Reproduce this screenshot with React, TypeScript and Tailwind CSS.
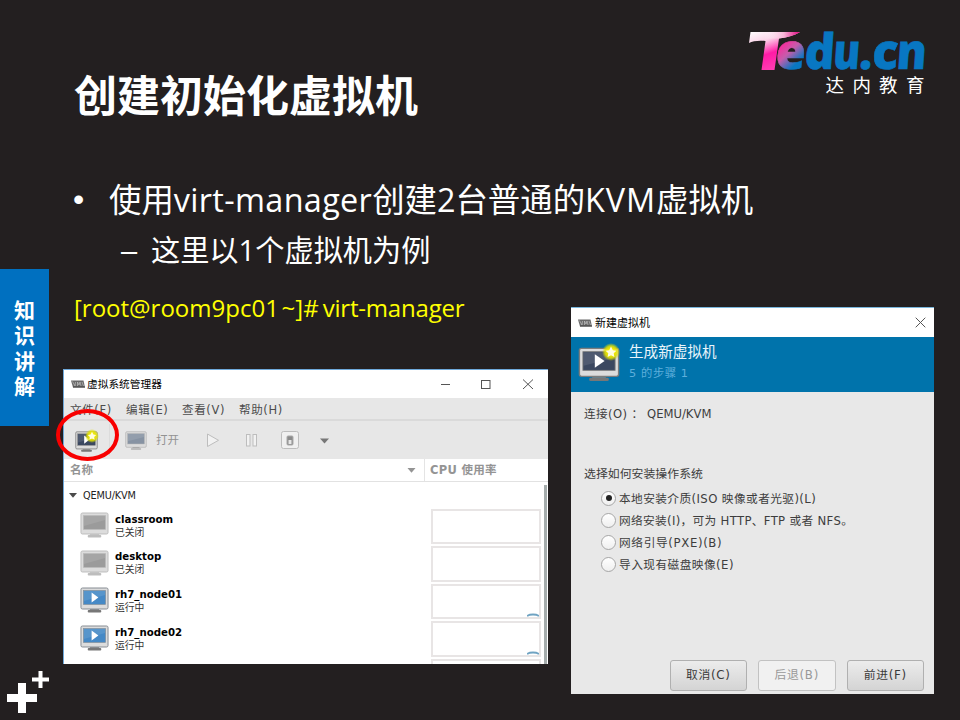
import React from "react";

const LATIN_UI = "font-['DejaVu_Sans','Noto_Sans_CJK_SC',sans-serif]";
const SLIDE = "font-['Open_Sans','Noto_Sans_CJK_SC',sans-serif]";
const CJK = "font-['Noto_Sans_CJK_SC',sans-serif]";
const MARKER = "font-['Liberation_Sans',sans-serif]";

const logoLetters = [
  { ch: "e", x: 28, w: 30 },
  { ch: "d", x: 57, w: 30 },
  { ch: "u", x: 85.5, w: 27 },
  { ch: ".", x: 112, w: 13 },
  { ch: "c", x: 124.5, w: 26 },
  { ch: "n", x: 149, w: 30 },
];

function Logo() {
  return (
    <svg className="block h-[70px] w-[180px] overflow-visible" viewBox="0 0 180 70">
      <defs>
        <linearGradient id="tee" x1="0" y1="0" x2="0.45" y2="1">
          <stop offset="0" stopColor="#ffffff" />
          <stop offset="0.3" stopColor="#fbd3e8" />
          <stop offset="0.62" stopColor="#ff1ba6" />
          <stop offset="1" stopColor="#ff3db2" />
        </linearGradient>
        <linearGradient id="bar" x1="0" y1="0" x2="1" y2="0">
          <stop offset="0" stopColor="#ffffff" stopOpacity="0" />
          <stop offset="0.55" stopColor="#f9b5d8" />
          <stop offset="1" stopColor="#e0007f" />
        </linearGradient>
        <linearGradient id="ee" gradientUnits="userSpaceOnUse" x1="28" y1="20" x2="44" y2="36">
          <stop offset="0" stopColor="#f0359f" />
          <stop offset="0.4" stopColor="#c65cab" />
          <stop offset="1" stopColor="#0877c2" />
        </linearGradient>
      </defs>
      <g
        transform="translate(3.400 0) skewX(-4)"
        className="font-['Open_Sans',sans-serif] text-[49px] font-extrabold"
        strokeWidth=".6"
      >
        {logoLetters.map((l, i) => (
          <text
            key={l.ch}
            x={l.x - 3}
            y="39.3"
            fill={i === 0 ? "url(#ee)" : "#0877c2"}
            stroke={i === 0 ? "url(#ee)" : "#0877c2"}
            textLength={l.w}
            lengthAdjust="spacingAndGlyphs"
          >
            {l.ch}
          </text>
        ))}
      </g>
      <path d="M1.500 2H51C46 5 39 7.500 30 8.500L25.500 40H12.500L16.500 11C9 10.500 4 11 0 13Z" fill="url(#tee)" />
      <path d="M15 2H51C46 5 39 7.500 30 8.500H16Z" fill="url(#bar)" />
      <text y="62" fill="#fff" className={CJK + " text-[18.5px]"}>
        <tspan x="76.500 103.500 130 157">达内教育</tspan>
      </text>
    </svg>
  );
}

function Monitor({ kind, className }: { kind: "off" | "on" | "new" | "dim"; className: string }) {
  const screen = { off: "#9b9b9b", on: "#4589c6", new: "#3b4860", dim: "#8793a3" }[kind];
  const edge = { off: "#bdbdbd", on: "#858b92", new: "#7c7c7c", dim: "#b5b5b5" }[kind];
  return (
    <svg className={className} viewBox="0 0 30 27" preserveAspectRatio="none">
      <path d="M11 20H19L20 23H10Z" fill={kind === "off" ? "#c9c9c9" : "#8a8a8a"} />
      <rect x="8" y="23" width="14" height="2.5" rx="1" fill={kind === "off" || kind === "dim" ? "#bdbdbd" : "#777"} />
      <rect x="1" y="1" width="28" height="21" rx="1.5" fill="#dcdcdc" stroke={edge} />
      <rect x="3.5" y="3.5" width="23" height="14" fill={screen} stroke={edge} strokeWidth=".6" />
      <path d="M4 4H26V8L4 14Z" fill="#fff" opacity=".1" />
      {(kind === "on" || kind === "new") && <path d="M12 5.500L19 10.500L12 15.500Z" fill="#fff" />}
    </svg>
  );
}

function Star({ className }: { className: string }) {
  return (
    <svg className={className} viewBox="0 0 20 20">
      <defs>
        <radialGradient id="glow">
          <stop offset="0.3" stopColor="#fff200" />
          <stop offset="0.68" stopColor="#e2e100" stopOpacity=".85" />
          <stop offset="1" stopColor="#d8dc00" stopOpacity="0" />
        </radialGradient>
      </defs>
      <circle cx="10" cy="10" r="10" fill="url(#glow)" />
      <path d="M10 4L12 8L16 8.600L13 11.500L13.800 15.500L10 13.600L6.200 15.500L7 11.500L4 8.600L8 8Z" fill="#fffde0" />
    </svg>
  );
}

function VmmMark() {
  return (
    <svg className="h-[8px] w-[14px] shrink-0" viewBox="0 0 14 8">
      <path d="M0 .5H12.500L14 7.500H2Z" fill="#6a6a6a" />
      <path d="M1.500 1.500L4 6L4.500 2M6.500 6V2L8 5L9 2L10 6M11 2L12.500 6" fill="none" stroke="#ccc" strokeWidth=".6" />
      <path d="M2 7H14" stroke="#444" />
    </svg>
  );
}

function Caret({ className }: { className: string }) {
  return (
    <svg className={className} viewBox="0 0 8 5">
      <path d="M0 0H8L4 4.800Z" fill="currentColor" />
    </svg>
  );
}

const vms = [
  { name: "classroom", state: "已关闭", on: false },
  { name: "desktop", state: "已关闭", on: false },
  { name: "rh7_node01", state: "运行中", on: true },
  { name: "rh7_node02", state: "运行中", on: true },
];

function Manager() {
  return (
    <section className={LATIN_UI + " relative flex h-[295px] w-[485px] flex-col border-t border-l border-[#6fa9db] bg-white"}>
      <div className="flex h-[28px] shrink-0 items-center pl-[7px] text-black">
        <VmmMark />
        <span className={CJK + " ml-[2px] text-[10.7px] leading-none"}>虚拟系统管理器</span>
        <svg className="ml-auto mr-[14px] h-[12px] w-[94px]" viewBox="0 0 94 12" fill="none" stroke="#555">
          <path d="M1 6.500H10" />
          <rect x="41.5" y="2.5" width="8.5" height="8" />
          <path d="M83 1.500L93 11M93 1.500L83 11" />
        </svg>
      </div>
      <div className="flex h-[23px] shrink-0 items-center border-b-2 border-[#dadada] bg-[#e7e7e7] pl-[6px] pt-[4px] text-[11.5px] leading-none tracking-[0.65px] text-[#4c4c4c]">
        <span className="w-[56px]">文件(F)</span>
        <span className="w-[56px]">编辑(E)</span>
        <span className="w-[57px]">查看(V)</span>
        <span>帮助(H)</span>
      </div>
      <div className="flex h-[38px] shrink-0 items-center bg-[#e7e7e7] text-[#929292]">
        <div className="relative ml-[11px] mt-[3px] h-[22px] w-[23px]">
          <Monitor kind="new" className="h-[22px] w-[23px]" />
          <Star className="absolute -right-[1px] -top-[2px] h-[14px] w-[14px]" />
        </div>
        <div className="ml-[11px] h-[32px] w-px bg-[#dcdcdc]" />
        <Monitor kind="dim" className="ml-[15px] mt-[2px] h-[20px] w-[22px]" />
        <span className="ml-[9px] mt-[1px] text-[11.5px] leading-none">打开</span>
        <svg className="ml-[27px] h-[20px] w-[123px]" viewBox="0 0 123 20" fill="none" stroke="#bdbdbd">
          <path d="M1.500 4L12.500 10.300L1.500 16.500Z" fill="#f2f2f2" />
          <rect x="40.5" y="4.5" width="3.5" height="11.5" fill="#f2f2f2" />
          <rect x="47" y="4.5" width="3.5" height="11.5" fill="#f2f2f2" />
          <rect x="75.5" y="1.5" width="17" height="17" rx="2" fill="#f0f0f0" />
          <rect x="81" y="6" width="6" height="9" rx="1" fill="#8b8b8b" stroke="#aaa" />
          <rect x="82.5" y="10" width="3" height="4" fill="#e7e7e7" stroke="none" />
          <path d="M114 8.500H123L118.500 13.500Z" fill="#777" stroke="none" />
        </svg>
      </div>
      <div className="flex h-[23px] shrink-0 items-center border-b border-[#e2e2e2] text-[11.5px] font-bold leading-none text-[#949494]">
        <span className="ml-[6px] mt-[2px]">名称</span>
        <Caret className="ml-auto mr-[8px] h-[5px] w-[9px]" />
        <div className="flex h-full w-[124px] items-center border-l border-[#e4e4e4] pl-[5px] pt-[2px] tracking-[0.3px]">CPU 使用率</div>
      </div>
      <div className="flex min-h-0 flex-1 overflow-hidden">
        <div className="flex-1">
          <div className="flex h-[25px] items-center pl-[5px] pt-[2px] text-[#4a4a4a]">
            <Caret className="h-[5px] w-[8px]" />
            <span className="ml-[6px] text-[9.7px] leading-none tracking-[-0.12px] text-[#222]">QEMU/KVM</span>
          </div>
          {vms.map((vm) => (
            <div key={vm.name} className="flex h-[37.6px] items-center pl-[16px]">
              <Monitor kind={vm.on ? "on" : "off"} className="h-[27px] w-[29px]" />
              <div className="ml-[6px] flex flex-col leading-none">
                <span className="text-[10.2px] font-bold leading-[13px] text-black">{vm.name}</span>
                <span className="text-[9.8px] leading-[13px] text-[#333]">{vm.state}</span>
              </div>
            </div>
          ))}
        </div>
        <div className="w-[110px] pt-[26.5px]">
          {[0, 1, 2, 3, 4].map((i) => (
            <div key={i} className="mb-[2px] flex h-[35.6px] items-end justify-end border-2 border-[#e8e5e5]">
              {(i === 2 || i === 3) && (
                <svg className="h-[4px] w-[12px]" viewBox="0 0 12 4">
                  <path d="M0 3Q2 1.500 6 1.500T12 3" fill="none" stroke="#6fa3c2" strokeWidth="1.8" />
                </svg>
              )}
            </div>
          ))}
        </div>
        <div className="ml-[3px] mr-[1px] mt-[3px] w-[3px] bg-[#a5acac]" />
      </div>
      <div className="absolute -left-[8px] top-[39px] h-[52px] w-[63px] rounded-[50%] border-[4px] border-[#f80000]" />
    </section>
  );
}

const options = [
  { label: "本地安装介质(ISO 映像或者光驱)(L)", t: "tracking-[0.4px]" },
  { label: "网络安装(I)，可为 HTTP、FTP 或者 NFS。", t: "tracking-[0.32px]" },
  { label: "网络引导(PXE)(B)", t: "tracking-[0.65px]" },
  { label: "导入现有磁盘映像(E)", t: "tracking-[0.45px]" },
];

function Dialog() {
  return (
    <section className={LATIN_UI + " flex h-[387px] w-[363px] flex-col border-t border-[#79b6dc] bg-[#e8e8e8] text-[#3d3d3d]"}>
      <div className="flex h-[29px] shrink-0 items-center bg-white pl-[7px]">
        <VmmMark />
        <span className={CJK + " ml-[3px] text-[11px] leading-none text-black"}>新建虚拟机</span>
        <svg className="ml-auto mr-[8px] h-[11px] w-[11px]" viewBox="0 0 11 11" stroke="#555">
          <path d="M.7.7L10.300 10.300M10.300.7L.7 10.300" />
        </svg>
      </div>
      <div className="flex h-[55px] shrink-0 bg-[#0073ab]">
        <div className="relative ml-[7px] mt-[10px] h-[36px] w-[41px]">
          <Monitor kind="new" className="h-[36px] w-[42px]" />
          <Star className="absolute -right-[1px] -top-[4px] h-[18px] w-[18px]" />
        </div>
        <div className="ml-[10px] flex flex-col leading-none">
          <span className="mt-[7px] text-[14.6px] leading-[15px] text-[#eaf5fb]">生成新虚拟机</span>
          <span className="mt-[8px] text-[11.3px] leading-[13px] tracking-[0.6px] text-[#5eafdc]">5 的步骤 1</span>
        </div>
      </div>
      <div className="pl-[13px] text-[11.6px] leading-[14px]">
        <p className="mt-[15px] flex">
          <span className="w-[63px] whitespace-pre tracking-[0.4px]">连接(O) ：</span>
          <span>QEMU/KVM</span>
        </p>
        <p className="mt-[46px] text-[11.9px]">选择如何安装操作系统</p>
        <div className="ml-[17px] mt-[6px] flex flex-col">
          {options.map((o, i) => (
            <label key={o.label} className="flex h-[22px] items-center">
              <span className="flex size-[15px] items-center justify-center rounded-full border border-[#a6a6a6] bg-linear-to-b from-white to-[#efefef]">
                {i === 0 && <span className="size-[6px] rounded-full bg-[#222]" />}
              </span>
              <span className={"ml-[3px] mt-[1px] whitespace-pre text-[11.7px] " + o.t}>{o.label}</span>
            </label>
          ))}
        </div>
      </div>
      <div className="mb-[3px] mr-[10px] mt-auto flex justify-end gap-[11px] text-[11.8px]">
        {["取消(C)", "后退(B)", "前进(F)"].map((b, i) => (
          <button
            key={b}
            className={
              "h-[31px] w-[77.5px] rounded-[3px] border leading-none tracking-[0.7px] " +
              (i === 1 ? "border-[#c2c2c2] bg-[#f1f1f1] text-[#999]" : "border-[#b0b0b0] bg-linear-to-b from-[#ececec] to-[#d4d4d4] text-[#3a3a3a]")
            }
          >
            {b}
          </button>
        ))}
      </div>
    </section>
  );
}

export default function App() {
  return (
    <div className="flex h-[720px] w-[960px] overflow-hidden bg-[#231f20]">
      <aside className="flex w-[50px] shrink-0 flex-col">
        <div className={CJK + " mt-[269px] flex h-[157px] w-[49px] flex-col items-center justify-center bg-[#0070c0] text-[21px] font-bold leading-[25.5px] text-white"}>
          {["知", "识", "讲", "解"].map((c) => (
            <span key={c}>{c}</span>
          ))}
        </div>
        <svg className="mb-[7px] mt-auto h-[43px] w-[50px]" viewBox="0 0 50 43" fill="#fff">
          <path d="M18 13H26V24H37V32H26V43H18V32H7V24H18Z" />
          <path d="M38.500 1H42.500V7.500H49V11.500H42.500V18H38.500V11.500H32V7.500H38.500Z" />
        </svg>
      </aside>
      <main className="flex-1">
        <header className="flex h-[170px] justify-between">
          <h1 className={CJK + " ml-[24px] mt-[61px] whitespace-nowrap text-[43px] font-bold leading-[64px] text-white"}>创建初始化虚拟机</h1>
          <div className="mr-[31px] mt-[30px]">
            <Logo />
          </div>
        </header>
        <div className={SLIDE + " flex h-[58px] items-center whitespace-nowrap text-[32.4px] text-white"}>
          <span className={MARKER + " ml-[23px] w-[36px] text-[32px] leading-none"}>•</span>
          <span>
            使用<span className="tracking-[0.33px]">virt-manager</span>创建2台普通的<span className="tracking-[0.9px]">KVM</span>虚拟机
          </span>
        </div>
        <div className={SLIDE + " flex h-[46px] items-center whitespace-nowrap text-[29.2px] text-white"}>
          <span className={MARKER + " ml-[71px] w-[30px] text-[29px] leading-none"}>–</span>
          <span>这里以1个虚拟机为例</span>
        </div>
        <div className="flex pt-[16px]">
          <div className="ml-[13px]">
            <p className={SLIDE + " ml-[11px] h-[79px] whitespace-nowrap text-[24px] leading-[35px] text-[#ffff00]"}>
              [root@room9pc01<span className="[word-spacing:-3.5px]"> ~]#</span>
              <span className="tracking-[-0.2px] [word-spacing:-2px]"> virt-manager</span>
            </p>
            <Manager />
          </div>
          <div className="ml-[23px] mt-[17px]">
            <Dialog />
          </div>
        </div>
      </main>
    </div>
  );
}
